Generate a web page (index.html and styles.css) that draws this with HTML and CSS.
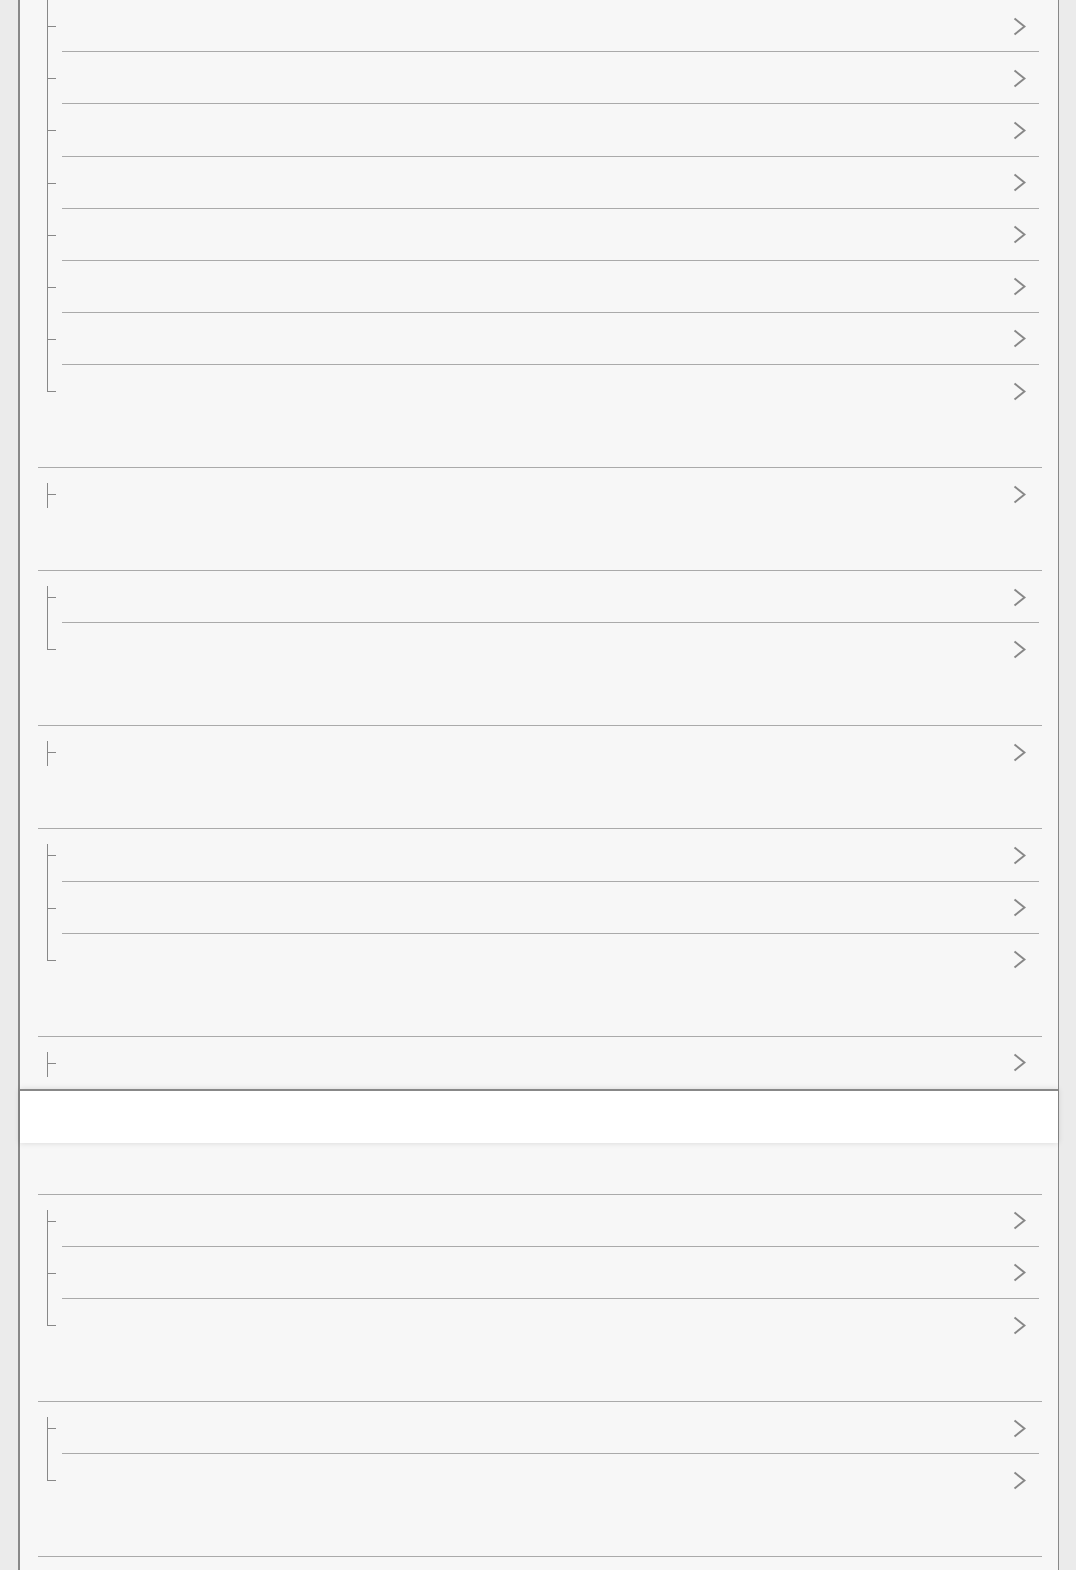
FILE: index.html
```html
<!DOCTYPE html>
<html lang="en">
<head>
	<meta charset="UTF-8">
	<title>列表</title>
	<link rel="stylesheet" href="styles.css">
</head>
<body>
<svg class="defs" width="0" height="0">
	<symbol id="chev" viewBox="0 0 13 19">
		<polyline points="1.5,1.5 11.5,9.5 1.5,17.5" fill="none" stroke="#888" stroke-width="2"/>
	</symbol>
</svg>
<section class="panel">
	<ul class="group cont">
		<li><a class="row" href="#"><i class="branch"></i><span class="body"><svg class="chev"><use href="#chev"/></svg></span></a></li>
		<li><a class="row" href="#"><i class="branch"></i><span class="body"><svg class="chev"><use href="#chev"/></svg></span></a></li>
		<li><a class="row" href="#"><i class="branch"></i><span class="body"><svg class="chev"><use href="#chev"/></svg></span></a></li>
		<li><a class="row" href="#"><i class="branch"></i><span class="body"><svg class="chev"><use href="#chev"/></svg></span></a></li>
		<li><a class="row" href="#"><i class="branch"></i><span class="body"><svg class="chev"><use href="#chev"/></svg></span></a></li>
		<li><a class="row" href="#"><i class="branch"></i><span class="body"><svg class="chev"><use href="#chev"/></svg></span></a></li>
		<li><a class="row" href="#"><i class="branch"></i><span class="body"><svg class="chev"><use href="#chev"/></svg></span></a></li>
		<li><a class="row" href="#"><i class="branch"></i><span class="body"><svg class="chev"><use href="#chev"/></svg></span></a></li>
	</ul>
	<ul class="group">
		<li><a class="row" href="#"><i class="branch"></i><span class="body"><svg class="chev"><use href="#chev"/></svg></span></a></li>
	</ul>
	<ul class="group">
		<li><a class="row" href="#"><i class="branch"></i><span class="body"><svg class="chev"><use href="#chev"/></svg></span></a></li>
		<li><a class="row" href="#"><i class="branch"></i><span class="body"><svg class="chev"><use href="#chev"/></svg></span></a></li>
	</ul>
	<ul class="group">
		<li><a class="row" href="#"><i class="branch"></i><span class="body"><svg class="chev"><use href="#chev"/></svg></span></a></li>
	</ul>
	<ul class="group">
		<li><a class="row" href="#"><i class="branch"></i><span class="body"><svg class="chev"><use href="#chev"/></svg></span></a></li>
		<li><a class="row" href="#"><i class="branch"></i><span class="body"><svg class="chev"><use href="#chev"/></svg></span></a></li>
		<li><a class="row" href="#"><i class="branch"></i><span class="body"><svg class="chev"><use href="#chev"/></svg></span></a></li>
	</ul>
	<ul class="group cut">
		<li><a class="row" href="#"><i class="branch"></i><span class="body"><svg class="chev"><use href="#chev"/></svg></span></a></li>
	</ul>

	<div class="head"></div>

	<ul class="group">
		<li><a class="row" href="#"><i class="branch"></i><span class="body"><svg class="chev"><use href="#chev"/></svg></span></a></li>
		<li><a class="row" href="#"><i class="branch"></i><span class="body"><svg class="chev"><use href="#chev"/></svg></span></a></li>
		<li><a class="row" href="#"><i class="branch"></i><span class="body"><svg class="chev"><use href="#chev"/></svg></span></a></li>
	</ul>
	<ul class="group">
		<li><a class="row" href="#"><i class="branch"></i><span class="body"><svg class="chev"><use href="#chev"/></svg></span></a></li>
		<li><a class="row" href="#"><i class="branch"></i><span class="body"><svg class="chev"><use href="#chev"/></svg></span></a></li>
	</ul>
	<ul class="group">
		<li><a class="row" href="#"><i class="branch"></i><span class="body"><svg class="chev"><use href="#chev"/></svg></span></a></li>
	</ul>
</section>
</body>
</html>
```

FILE: styles.css
```css
body, ul {
	padding: 0;
	margin: 0;
}
body {
	background: #ebebeb;
	font-family: "Liberation Sans", Arial, sans-serif;
}
.defs {
	position: absolute;
	width: 0;
	height: 0;
}
.panel {
	width: 1038px;
	margin-left: 18px;
	padding-top: .3px;
	background: #f7f7f7;
	border-left: 2px solid #888;
	border-right: 1px solid #888;
}
.group {
	list-style: none;
	margin: 0 16px 0 18px;
	padding-bottom: 50px;
	border-top: 1px solid #aaa;
}
.group.cont {
	border-top: none;
}
.group.cut {
	padding-bottom: 0;
}
.row {
	display: flex;
	height: 52.1px;
	text-decoration: none;
	color: #333;
}
.branch {
	position: relative;
	width: 24px;
	flex: none;
}
.branch:before {
	content: '';
	position: absolute;
	left: 9px;
	top: 0;
	bottom: 0;
	width: 1px;
	background: #888;
}
.branch:after {
	content: '';
	position: absolute;
	left: 10px;
	top: 26px;
	width: 8px;
	height: 1px;
	background: #888;
}
li:first-child .branch:before {
	top: 15px;
}
.cont li:first-child .branch:before {
	top: 0;
}
li:last-child .branch:before {
	bottom: 25px;
}
li:first-child:last-child .branch:before {
	bottom: 12px;
}
.body {
	flex: 1;
	display: flex;
	align-items: center;
	justify-content: flex-end;
	margin-right: 3px;
	padding: 1px 13px 0 0;
	border-bottom: 1px solid #aaa;
}
li:last-child .body {
	padding-top: 0;
	border-bottom: none;
}
.chev {
	width: 13px;
	height: 19px;
}
.head {
	position: relative;
	height: 52px;
	margin-bottom: 51px;
	background: #fff;
	border-top: 2px solid #888;
	box-shadow: 0 0 6px rgba(0, 0, 0, .14);
}
```
